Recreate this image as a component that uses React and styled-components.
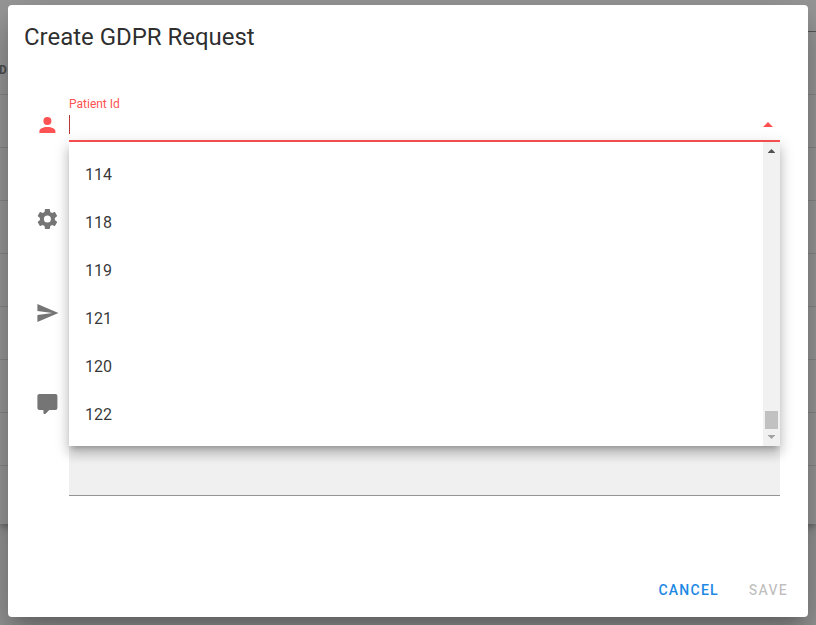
import React from "react";
import styled, { createGlobalStyle } from "styled-components";

const GlobalStyle = createGlobalStyle`
  * { box-sizing: border-box; }
  body { margin: 0; overflow: hidden; font-family: Roboto, "Liberation Sans", sans-serif; }
`;

const Page = styled.div`
  position: relative;
  height: 625px;
  overflow: hidden;
  background: #fafafa;
`;

const TableCard = styled.section`
  height: 524px;
  background: #fff;
  box-shadow: 0 3px 5px -1px rgba(0, 0, 0, 0.2), 0 5px 8px 0 rgba(0, 0, 0, 0.14), 0 1px 14px 0 rgba(0, 0, 0, 0.12);
`;

const SearchBar = styled.div`
  width: 20px;
  height: 32px;
  margin-left: auto;
  border-bottom: 1px solid #858585;
`;

const HeadRow = styled.div`
  height: 63px;
  padding-top: 29px;
  border-bottom: 1px solid #dedede;
  color: #777;
  font-size: 12px;
  font-weight: 700;
  line-height: 18px;
  text-indent: -1px;
`;

const TableRow = styled.div`
  height: 53px;
  border-bottom: 1px solid #dedede;
`;

const Scrim = styled.div`
  position: absolute;
  inset: 0;
  padding: 5px 8px 8px;
  background: rgba(33, 33, 33, 0.46);
`;

const Dialog = styled.div`
  display: flex;
  flex-direction: column;
  height: 612px;
  border-radius: 4px;
  background: #fff;
  box-shadow: 0 11px 15px -7px rgba(0, 0, 0, 0.2), 0 24px 38px 3px rgba(0, 0, 0, 0.14), 0 9px 46px 8px rgba(0, 0, 0, 0.12);
`;

const Title = styled.h1`
  margin: 0;
  padding: 16px 16px 0;
  height: 91px;
  color: rgba(0, 0, 0, 0.84);
  font-size: 24px;
  font-weight: 400;
  letter-spacing: -0.03px;
  line-height: 32px;
`;

const Form = styled.div`
  flex: 1;
  padding: 0 28px;
`;

const Field = styled.div`
  display: flex;
  height: ${({ $height }) => $height}px;
`;

const IconSlot = styled.div`
  display: flex;
  width: 33px;
  padding-top: 17px;
  color: ${({ $active }) => ($active ? "#ff5252" : "#757575")};
`;

const Icon = styled.svg`
  display: block;
  width: 24px;
  height: 24px;
  margin-left: -1px;
  overflow: visible;
  fill: currentColor;
`;

const Select = styled.div`
  position: relative;
  flex: 1;
  height: 46px;
  border-bottom: 2px solid #ff5252;
`;

const Label = styled.div`
  color: #ff5252;
  font-size: 12px;
  line-height: 16px;
`;

const InputLine = styled.div`
  display: flex;
  align-items: flex-start;
  justify-content: space-between;
  height: 25px;
  padding: 3px 7px 0 0;
`;

const Caret = styled.span`
  width: 1px;
  height: 19px;
  background: #b73b3b;
`;

const Arrow = styled.svg`
  display: block;
  width: 10px;
  height: 5px;
  margin-top: 7px;
  fill: #ff5252;
`;

const Menu = styled.div`
  position: absolute;
  z-index: 2;
  top: 46px;
  left: 0;
  right: 0;
  height: 304px;
  display: flex;
  background: #fff;
  box-shadow: 0 5px 5px -3px rgba(0, 0, 0, 0.2), 0 8px 10px 1px rgba(0, 0, 0, 0.14), 0 3px 14px 2px rgba(0, 0, 0, 0.12);
`;

const Options = styled.ul`
  flex: 1;
  margin: 0;
  padding: 9px 0 7px;
  list-style: none;
`;

const Option = styled.li`
  height: 48px;
  padding-left: 16px;
  color: rgba(0, 0, 0, 0.8);
  font-size: 16px;
  line-height: 48px;
`;

const Scrollbar = styled.div`
  display: flex;
  flex-direction: column;
  align-items: center;
  justify-content: flex-end;
  width: 17px;
  padding: 7px 0 7px;
  background: #f1f1f1;
`;

const ScrollArrow = styled.svg`
  display: block;
  width: 7px;
  height: 4px;
  fill: ${({ $dim }) => ($dim ? "#a3a3a3" : "#505050")};
`;

const Thumb = styled.span`
  width: 13px;
  height: 18px;
  margin: auto 0 6px;
  background: #c1c1c1;
`;

const TextArea = styled.div`
  flex: 1;
  height: 121px;
  background: #f0f0f0;
  border-bottom: 1px solid #949494;
`;

const Actions = styled.footer`
  display: flex;
  justify-content: flex-end;
  height: 53px;
  padding: 8px 5px 9px 8px;
`;

const Button = styled.button`
  height: 36px;
  padding: 0 ${({ disabled }) => (disabled ? 15 : 14)}px 0 16px;
  border: 0;
  background: none;
  color: ${({ disabled }) => (disabled ? "rgba(0, 0, 0, 0.26)" : "#1e88e5")};
  font-family: inherit;
  font-size: 14px;
  font-weight: 500;
  letter-spacing: 1.25px;
  text-transform: uppercase;
`;

const ICONS = {
  account: "M12,4A4,4 0 0,1 16,8A4,4 0 0,1 12,12A4,4 0 0,1 8,8A4,4 0 0,1 12,4M12,14C16.42,14 20,15.79 20,18V20H4V18C4,15.79 7.58,14 12,14Z",
  cog: "M12,15.5A3.5,3.5 0 0,1 8.5,12A3.5,3.5 0 0,1 12,8.5A3.5,3.5 0 0,1 15.5,12A3.5,3.5 0 0,1 12,15.5M19.43,12.97C19.47,12.65 19.5,12.33 19.5,12C19.5,11.67 19.47,11.34 19.43,11L21.54,9.37C21.73,9.22 21.78,8.95 21.66,8.73L19.66,5.27C19.54,5.05 19.27,4.96 19.05,5.05L16.56,6.05C16.04,5.66 15.5,5.32 14.87,5.07L14.5,2.42C14.46,2.18 14.25,2 14,2H10C9.75,2 9.54,2.18 9.5,2.42L9.13,5.07C8.5,5.32 7.96,5.66 7.44,6.05L4.95,5.05C4.73,4.96 4.46,5.05 4.34,5.27L2.34,8.73C2.21,8.95 2.27,9.22 2.46,9.37L4.57,11C4.53,11.34 4.5,11.67 4.5,12C4.5,12.33 4.53,12.65 4.57,12.97L2.46,14.63C2.27,14.78 2.21,15.05 2.34,15.27L4.34,18.73C4.46,18.95 4.73,19.03 4.95,18.95L7.44,17.94C7.96,18.34 8.5,18.68 9.13,18.93L9.5,21.58C9.54,21.82 9.75,22 10,22H14C14.25,22 14.46,21.82 14.5,21.58L14.87,18.93C15.5,18.67 16.04,18.34 16.56,17.94L19.05,18.95C19.27,19.03 19.54,18.95 19.66,18.73L21.66,15.27C21.78,15.05 21.73,14.78 21.54,14.63L19.43,12.97Z",
  send: "M2,21L23,12L2,3V10L17,12L2,14V21Z",
  comment: "M9,22A1,1 0 0,1 8,21V18H4A2,2 0 0,1 2,16V4C2,2.89 2.9,2 4,2H20A2,2 0 0,1 22,4V16A2,2 0 0,1 20,18H13.9L10.2,21.71C10,21.9 9.75,22 9.5,22V22H9Z",
};

function FieldIcon({ name, active }) {
  return (
    <IconSlot $active={active}>
      <Icon viewBox="-0.4 0 24 24"><path d={ICONS[name]} /></Icon>
    </IconSlot>
  );
}

const PATIENT_IDS = ["114", "118", "119", "121", "120", "122"];

export default function App() {
  return (
    <Page>
      <GlobalStyle />
      <TableCard>
        <SearchBar />
        <HeadRow>D</HeadRow>
        {Array.from({ length: 7 }, (_, i) => <TableRow key={i} />)}
      </TableCard>
      <Scrim>
        <Dialog role="dialog">
          <Title>Create GDPR Request</Title>
          <Form>
            <Field $height={94}>
              <FieldIcon name="account" active />
              <Select>
                <Label>Patient Id</Label>
                <InputLine>
                  <Caret />
                  <Arrow viewBox="0 0 10 5"><path d="M0 5 5 0l5 5z" /></Arrow>
                </InputLine>
                <Menu>
                  <Options>
                    {PATIENT_IDS.map((id) => <Option key={id}>{id}</Option>)}
                  </Options>
                  <Scrollbar>
                    <ScrollArrow viewBox="0 0 7 4"><path d="M0 4V3.5L3.5 0 7 3.5V4z" /></ScrollArrow>
                    <Thumb />
                    <ScrollArrow $dim viewBox="0 0 7 4"><path d="M0 0v.5L3.5 4 7 .5V0z" /></ScrollArrow>
                  </Scrollbar>
                </Menu>
              </Select>
            </Field>
            <Field $height={94}><FieldIcon name="cog" /></Field>
            <Field $height={91}><FieldIcon name="send" /></Field>
            <Field $height={121}>
              <FieldIcon name="comment" />
              <TextArea />
            </Field>
          </Form>
          <Actions>
            <Button>Cancel</Button>
            <Button disabled>Save</Button>
          </Actions>
        </Dialog>
      </Scrim>
    </Page>
  );
}
